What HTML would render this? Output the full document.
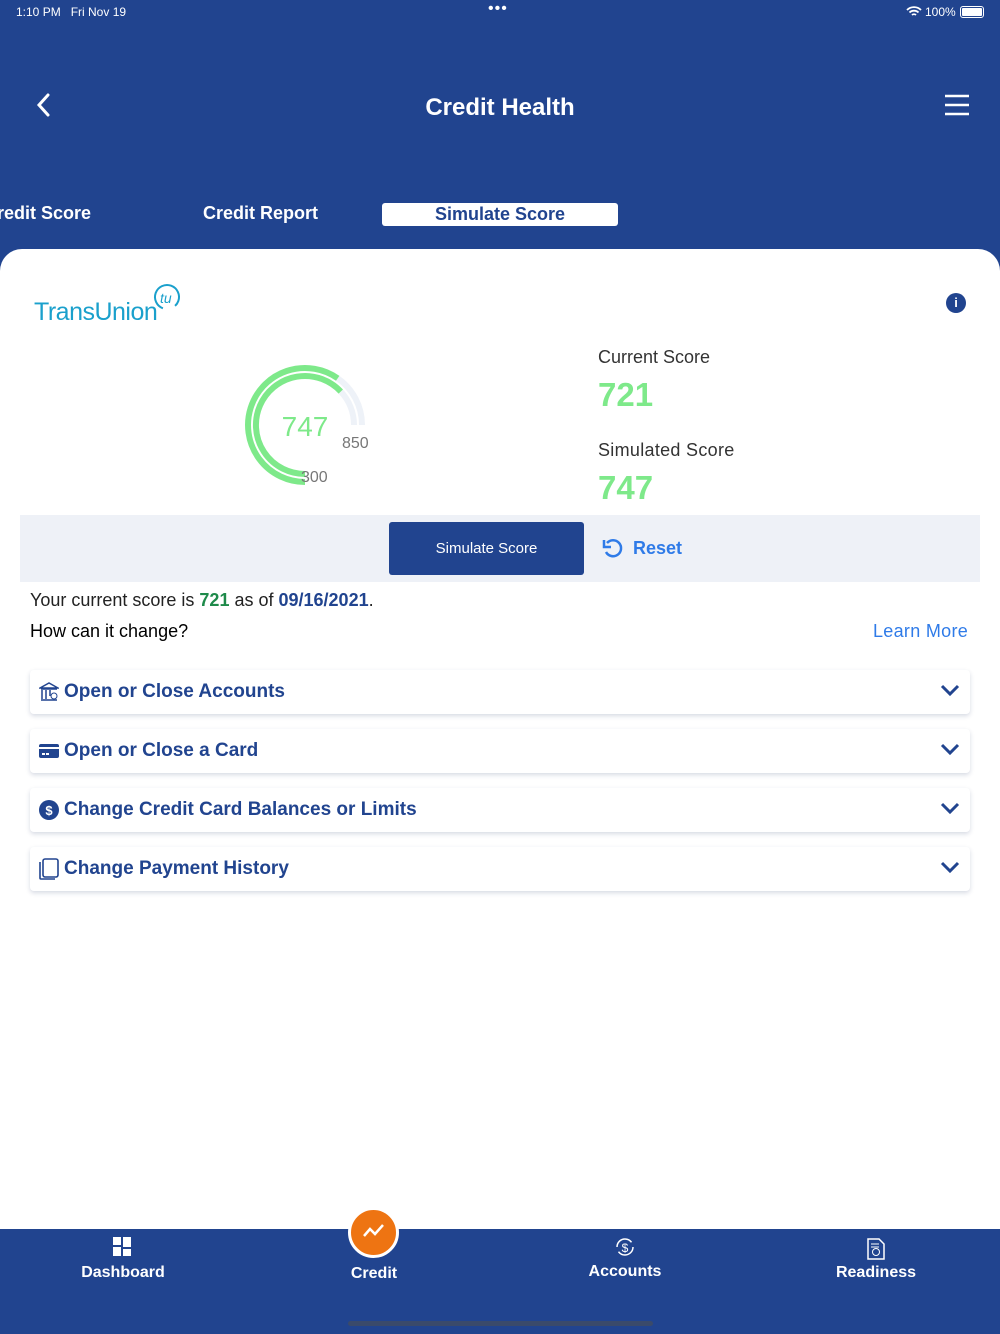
<!DOCTYPE html>
<html><head><meta charset="utf-8"><style>
*{margin:0;padding:0;box-sizing:border-box}
body{width:1000px;height:1334px;background:#21448f;font-family:"Liberation Sans",sans-serif;position:relative;overflow:hidden}
.a{position:absolute}
.w{color:#fff}
.card{left:0;top:249px;width:1000px;height:980px;background:#fff;border-radius:22px 22px 0 0}
.row{left:30px;width:940px;height:44px;background:#fff;border-radius:4px;box-shadow:0 2px 5px rgba(30,50,100,.18);color:#21448f;font-weight:bold;font-size:19px;line-height:44px;padding-left:34px}
.row svg.i{position:absolute;left:9px;top:12px}
.row .ch{position:absolute;right:10px;top:14px}
.tab{font-size:14px;font-weight:bold;color:#fff;text-align:center;width:150px}
</style></head><body>
<div class="a w" style="left:16px;top:5px;font-size:12px">1:10 PM&nbsp;&nbsp; Fri Nov 19</div>
<div class="a w" style="left:488px;top:0;font-size:16px;letter-spacing:1px">•••</div>
<div class="a w" style="left:925px;top:5px;font-size:12px">100%</div>
<div class="a" style="left:960px;top:6px;width:24px;height:12px;border:1px solid #fff;border-radius:3px;padding:1px"><div style="background:#fff;height:100%;border-radius:1px"></div></div>
<svg class="a" style="left:906px;top:6px" width="16" height="12" viewBox="0 0 16 12"><path d="M1 4a10 10 0 0 1 14 0M3.5 6.5a6.5 6.5 0 0 1 9 0M6 9a3 3 0 0 1 4 0" stroke="#fff" stroke-width="1.8" fill="none"/></svg>
<svg class="a" style="left:34px;top:92px" width="20" height="26"><path d="M14 3L5 13l9 10" stroke="#fff" stroke-width="3" fill="none" stroke-linecap="round"/></svg>
<div class="a w" style="left:0;width:1000px;top:94px;text-align:center;font-size:24px;font-weight:bold">Credit Health</div>
<svg class="a" style="left:944px;top:94px" width="26" height="22"><path d="M1 2h24M1 11h24M1 20h24" stroke="#fff" stroke-width="2.5"/></svg>
<div class="a w" style="right:909px;top:203px;font-size:18px;font-weight:bold;white-space:nowrap">Credit Score</div>
<div class="a w" style="left:203px;top:203px;font-size:18px;font-weight:bold">Credit Report</div>
<div class="a" style="left:382px;top:203px;width:236px;height:23px;background:#fff;border-radius:3px;color:#21448f;font-size:18px;font-weight:bold;text-align:center;line-height:23px">Simulate Score</div>
<div class="a card"></div>
<div class="a" style="left:34px;top:298px;font-size:25px;color:#1aa0cc;letter-spacing:-.5px">TransUnion</div>
<svg class="a" style="left:152px;top:282px" width="30" height="30"><circle cx="15" cy="15" r="12" stroke="#1aa0cc" stroke-width="2" fill="none" stroke-dasharray="62 14" transform="rotate(110 15 15)"/><text x="8" y="21" font-size="14" font-style="italic" fill="#1aa0cc" font-family="Liberation Sans">tu</text></svg>
<div class="a" style="left:946px;top:293px;width:20px;height:20px;border-radius:50%;background:#21448f;color:#fff;font-size:13px;font-weight:bold;text-align:center;line-height:20px">i</div>
<svg class="a" style="left:0;top:0" width="400" height="500">
<path d="M337.7 378.3A57 57 0 0 1 362 425M340.8 391.6A49 49 0 0 1 354 425" stroke="#eef2f8" stroke-width="6" fill="none"/>
<path d="M305 482A57 57 0 1 1 337.7 378.3M305 474A49 49 0 1 1 340.8 391.6" stroke="#7ee98a" stroke-width="6" fill="none"/>
<text x="305" y="436" font-size="28" fill="#7ee98a" text-anchor="middle" font-family="Liberation Sans">747</text>
<text x="342" y="448" font-size="16" fill="#777" font-family="Liberation Sans">850</text>
<text x="301" y="482" font-size="16" fill="#777" font-family="Liberation Sans">300</text>
</svg>
<div class="a" style="left:598px;top:347px;font-size:18px;color:#333">Current Score</div>
<div class="a" style="left:598px;top:376px;font-size:33px;color:#7ee98a;font-weight:bold">721</div>
<div class="a" style="left:598px;top:440px;font-size:18px;color:#333;letter-spacing:.3px">Simulated Score</div>
<div class="a" style="left:598px;top:469px;font-size:33px;color:#7ee98a;font-weight:bold">747</div>
<div class="a" style="left:20px;top:515px;width:960px;height:67px;background:#eef1f7"></div>
<div class="a" style="left:389px;top:522px;width:195px;height:53px;background:#21448f;border-radius:3px;color:#fff;font-size:15px;text-align:center;line-height:53px">Simulate Score</div>
<svg class="a" style="left:602px;top:537px" width="22" height="22"><path d="M5 6a8 8 0 1 1-1 9" stroke="#2f7be8" stroke-width="2.5" fill="none"/><path d="M2 3v7h7" stroke="#2f7be8" stroke-width="2.5" fill="none"/></svg>
<div class="a" style="left:633px;top:538px;font-size:18px;font-weight:bold;color:#2f7be8">Reset</div>
<div class="a" style="left:30px;top:590px;font-size:18px;color:#222">Your current score is <b style="color:#1e8a4a">721</b> as of <b style="color:#21448f">09/16/2021</b>.</div>
<div class="a" style="left:30px;top:621px;font-size:18px;color:#000">How can it change?</div>
<div class="a" style="left:873px;top:621px;font-size:18px;color:#2f7be8;letter-spacing:.3px">Learn More</div>
<div class="a row" style="top:670px"><svg class="i" width="20" height="20"><path d="M1 6L10 1l9 5zM2 7h16M3 8v9M7 8v9M11 8v6M2 18h16" stroke="#21448f" stroke-width="1.5" fill="none"/><circle cx="15" cy="14" r="3" stroke="#21448f" fill="none"/></svg>Open or Close Accounts<svg class="ch" width="20" height="14"><path d="M2 2l8 8 8-8" stroke="#21448f" stroke-width="3" fill="none"/></svg></div>
<div class="a row" style="top:729px"><svg class="i" width="20" height="20"><rect x="0" y="3" width="20" height="14" rx="2" fill="#21448f"/><rect x="0" y="6" width="20" height="2" fill="#fff"/><rect x="3" y="12" width="3" height="2" fill="#fff"/><rect x="7" y="12" width="3" height="2" fill="#fff"/></svg>Open or Close a Card<svg class="ch" width="20" height="14"><path d="M2 2l8 8 8-8" stroke="#21448f" stroke-width="3" fill="none"/></svg></div>
<div class="a row" style="top:788px"><svg class="i" width="20" height="20"><circle cx="10" cy="10" r="10" fill="#21448f"/><text x="10" y="15" font-size="13" fill="#fff" text-anchor="middle" font-family="Liberation Sans">$</text></svg>Change Credit Card Balances or Limits<svg class="ch" width="20" height="14"><path d="M2 2l8 8 8-8" stroke="#21448f" stroke-width="3" fill="none"/></svg></div>
<div class="a row" style="top:847px"><svg class="i" width="20" height="22" style="top:11px"><rect x="4" y="1" width="15" height="18" rx="2" stroke="#21448f" stroke-width="1.6" fill="none"/><path d="M1 4v16a1 1 0 0 0 1 1h14" stroke="#21448f" stroke-width="1.6" fill="none"/></svg>Change Payment History<svg class="ch" width="20" height="14"><path d="M2 2l8 8 8-8" stroke="#21448f" stroke-width="3" fill="none"/></svg></div>
<svg class="a" style="left:113px;top:1237px" width="19" height="19"><rect x="0" y="0" width="8" height="8" fill="#fff"/><rect x="10" y="0" width="8" height="10" fill="#fff"/><rect x="0" y="10" width="8" height="9" fill="#fff"/><rect x="10" y="12" width="8" height="7" fill="#fff"/></svg>
<div class="a tab" style="left:48px;top:1264px;font-size:16px">Dashboard</div>
<div class="a" style="left:348px;top:1207px;width:51px;height:51px;border-radius:50%;background:#ee7412;border:3px solid #fff"></div>
<svg class="a" style="left:362px;top:1222px" width="24" height="18"><path d="M2 14l6-7 5 5 8-9" stroke="#fff" stroke-width="2.5" fill="none"/></svg>
<div class="a tab" style="left:299px;top:1265px;font-size:16px">Credit</div>
<svg class="a" style="left:615px;top:1237px" width="20" height="20"><circle cx="10" cy="10" r="8" stroke="#fff" stroke-width="1.5" fill="none" stroke-dasharray="20 5"/><text x="10" y="15" font-size="12" fill="#fff" text-anchor="middle" font-family="Liberation Sans">$</text></svg>
<div class="a tab" style="left:550px;top:1263px;font-size:16px">Accounts</div>
<svg class="a" style="left:867px;top:1238px" width="18" height="22"><path d="M1 1h11l5 5v15H1z" stroke="#fff" stroke-width="1.5" fill="none"/><circle cx="9" cy="14" r="3.5" stroke="#fff" fill="none"/><path d="M4 6h8M4 9h8" stroke="#fff"/></svg>
<div class="a tab" style="left:801px;top:1264px;font-size:16px">Readiness</div>
<div class="a" style="left:348px;top:1321px;width:305px;height:5px;background:#3a4a6a;border-radius:3px"></div>
</body></html>
